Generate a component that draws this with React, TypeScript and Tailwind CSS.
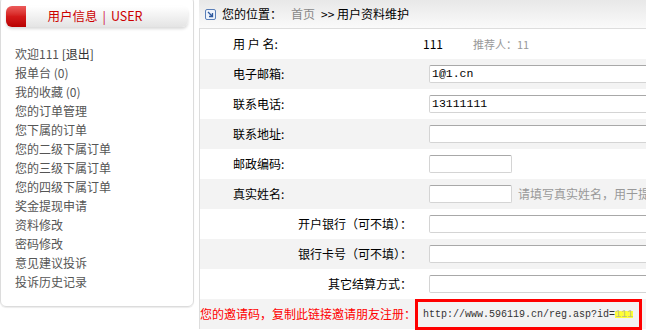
import type { ReactNode } from "react";

const menu = [
    "报单台 (0)",
    "我的收藏 (0)",
    "您的订单管理",
    "您下属的订单",
    "您的二级下属订单",
    "您的三级下属订单",
    "您的四级下属订单",
    "奖金提现申请",
    "资料修改",
    "密码修改",
    "意见建议投诉",
    "投诉历史记录",
];

function Field({ wide = true, value = "" }: { wide?: boolean; value?: string }) {
    return (
        <div
            className={`ml-[14px] h-[18px] shrink-0 flex items-center px-[2px] rounded-[2px] border border-[#d4d4d4] border-t-[#a8a8a8] bg-white font-['Liberation_Mono',monospace] text-[11.5px] text-black ${
                wide ? "w-[260px]" : "w-[83px]"
            }`}
        >
            {value}
        </div>
    );
}

function Row({
    label,
    right = false,
    gray = false,
    red = false,
    children,
}: {
    label: string;
    right?: boolean;
    gray?: boolean;
    red?: boolean;
    children: ReactNode;
}) {
    return (
        <div className={`h-[30px] flex items-center ${gray ? "bg-[#f3f3f3]" : "bg-white"}`}>
            <div
                className={`w-[215px] shrink-0 whitespace-nowrap ${
                    right ? "text-right pr-[3px]" : "pl-[33px]"
                } ${red ? "text-[#ff0000]" : "text-black"}`}
            >
                {label}
            </div>
            <div className="flex items-center whitespace-nowrap">{children}</div>
        </div>
    );
}

function LocIcon() {
    return (
        <svg width="11" height="11" viewBox="0 0 11 11" className="shrink-0">
            <rect x="0.5" y="0.5" width="10" height="10" rx="1.5" fill="#eef3fb" stroke="#5a7fb8" />
            <path d="M3 3 L7.5 7.5 M7.5 4 V7.5 H4" stroke="#2f5a9e" strokeWidth="1.3" fill="none" />
        </svg>
    );
}

export default function App() {
    return (
        <div className="w-[646px] h-[330px] overflow-hidden bg-white flex font-['Noto_Sans_CJK_SC','Liberation_Sans',sans-serif] text-[12px]">
            {/* 左侧菜单 */}
            <div className="w-[194px] h-[311px] shrink-0 -mt-[4px] border border-[#dcdcdc] rounded-[6px] shadow-[0_1px_1px_rgba(0,0,0,0.08)] pt-[9px] px-[5px]">
                <div className="h-[21px] flex rounded-[6px] bg-gradient-to-b from-white to-[#e4e4e4] shadow-[0_2px_3px_rgba(0,0,0,0.15)]">
                    <div className="w-[20px] rounded-l-[6px] bg-gradient-to-b from-[#ec5a5a] via-[#d41a1a] to-[#b80000]" />
                    <div className="flex-1 flex items-center justify-center pr-[24px] text-[#cc0000] text-[12.5px] leading-none">
                        用户信息 <span className="mx-[5px] text-[#d01040]">|</span>USER
                    </div>
                </div>
                <div className="mt-[17px] pl-[9px] leading-[19px] text-[#555]">
                    <div>
                        欢迎111 <span className="text-[#333]">[退出]</span>
                    </div>
                    {menu.map((m) => (
                        <div key={m}>{m}</div>
                    ))}
                </div>
            </div>

            {/* 右侧内容 */}
            <div className="ml-[5px] flex-1 flex flex-col">
                <div className="h-[29px] shrink-0 flex items-center pl-[6px] bg-gradient-to-b from-[#e8e8e8] to-[#fafafa] border-b border-[#dddddd] text-black">
                    <LocIcon />
                    <span className="ml-[6px]">您的位置：</span>
                    <span className="ml-[9px] text-[#888]">首页</span>
                    <span className="ml-[6px]">&gt;&gt; 用户资料维护</span>
                </div>
                <div className="border-l border-[#dddddd]">
                    <Row label="用 户 名:">
                        <span className="ml-[8px] text-black">111</span>
                        <span className="ml-[30px] text-[#999] text-[11px]">推荐人：11</span>
                    </Row>
                    <Row label="电子邮箱:" gray>
                        <Field value="1@1.cn" />
                    </Row>
                    <Row label="联系电话:">
                        <Field value="13111111" />
                    </Row>
                    <Row label="联系地址:" gray>
                        <Field />
                    </Row>
                    <Row label="邮政编码:">
                        <Field wide={false} />
                    </Row>
                    <Row label="真实姓名:" gray>
                        <Field wide={false} />
                        <span className="ml-[6px] text-[#999]">请填写真实姓名，用于提现时核对</span>
                    </Row>
                    <Row label="开户银行（可不填）：" right>
                        <Field />
                    </Row>
                    <Row label="银行卡号（可不填）：" right gray>
                        <Field />
                    </Row>
                    <Row label="其它结算方式：" right>
                        <Field />
                    </Row>
                    <Row label="您的邀请码，复制此链接邀请朋友注册：" right gray red>
                        <div className="w-[227px] h-[31px] flex items-center pl-[5px] border-[3px] border-[#ff0000] bg-[#f3f3f3] font-['Liberation_Mono',monospace] text-[10px] text-[#333]">
                            http://www.596119.cn/reg.asp?id=
                            <span className="inline-block h-[7px] leading-[7px] bg-[#ffff33] text-[#bbbb88]">111</span>
                        </div>
                    </Row>
                </div>
            </div>
        </div>
    );
}
